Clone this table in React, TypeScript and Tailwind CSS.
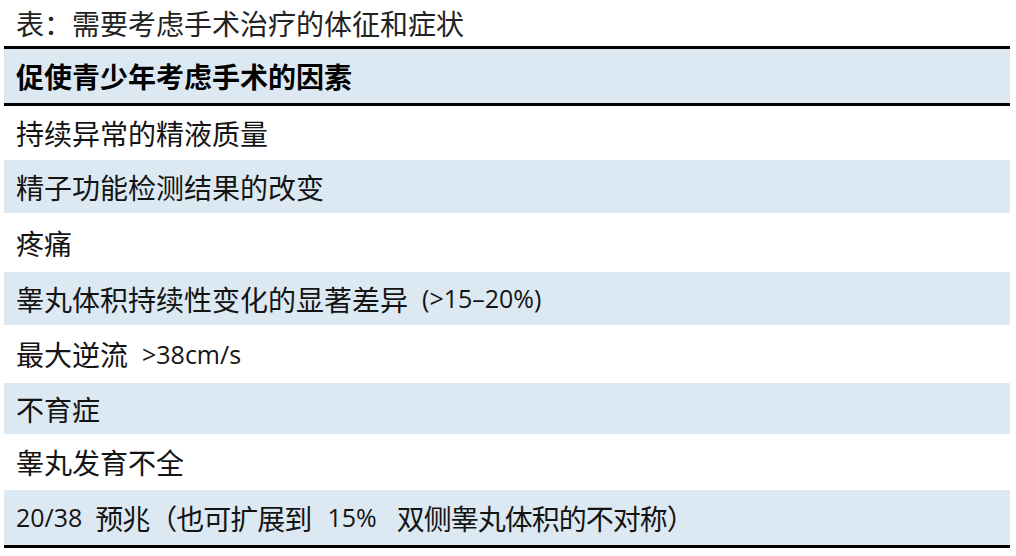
const cjk = "font-['Noto_Sans_CJK_SC',sans-serif]";
const latin = "font-['Open_Sans','Noto_Sans_CJK_SC',sans-serif] text-[25px]";

interface Row {
  h: string;
  blue: boolean;
  content: React.ReactNode;
}

const rows: Row[] = [
  { h: "h-[54px]", blue: false, content: <span>持续异常的精液质量</span> },
  { h: "h-[53px]", blue: true, content: <span>精子功能检测结果的改变</span> },
  { h: "h-[59px]", blue: false, content: <span>疼痛</span> },
  {
    h: "h-[53px]",
    blue: true,
    content: (
      <>
        <span>睾丸体积持续性变化的显著差异</span>
        <span className={`${latin} ml-[14px]`}>(&gt;15–20%)</span>
      </>
    ),
  },
  {
    h: "h-[58px]",
    blue: false,
    content: (
      <>
        <span>最大逆流</span>
        <span className={`${latin} ml-[14px]`}>&gt;38cm/s</span>
      </>
    ),
  },
  { h: "h-[51px]", blue: true, content: <span>不育症</span> },
  { h: "h-[56px]", blue: false, content: <span>睾丸发育不全</span> },
  {
    h: "h-[55px]",
    blue: true,
    content: (
      <>
        <span className={latin}>20/38</span>
        <span className="ml-[13px] tracking-[-1px]">预兆（也可扩展到</span>
        <span className={`${latin} ml-[16px]`}>15%</span>
        <span className="ml-[20px] tracking-[-1px]">双侧睾丸体积的不对称）</span>
      </>
    ),
  },
];

export default function App() {
  return (
    <div className={`w-[1016px] h-[556px] bg-white text-[#141414] ${cjk}`}>
      <div className="h-[46px] pl-[16px] flex items-center text-[28px] leading-none text-[#222]">
        表：需要考虑手术治疗的体征和症状
      </div>
      <div className="ml-[4px] w-[1006px]">
        <div className="h-[3px] bg-black" />
        <div className="h-[54px] bg-[#dce9f2] flex items-center pl-[12px] text-[28px] font-bold leading-none text-black">
          促使青少年考虑手术的因素
        </div>
        <div className="h-[3px] bg-black" />
        {rows.map((row, i) => (
          <div
            key={i}
            className={`${row.h} flex items-center pl-[12px] text-[28px] leading-none whitespace-nowrap ${
              row.blue ? "bg-[#dce9f2]" : "bg-white"
            }`}
          >
            {row.content}
          </div>
        ))}
        <div className="h-[3px] bg-black" />
      </div>
    </div>
  );
}
